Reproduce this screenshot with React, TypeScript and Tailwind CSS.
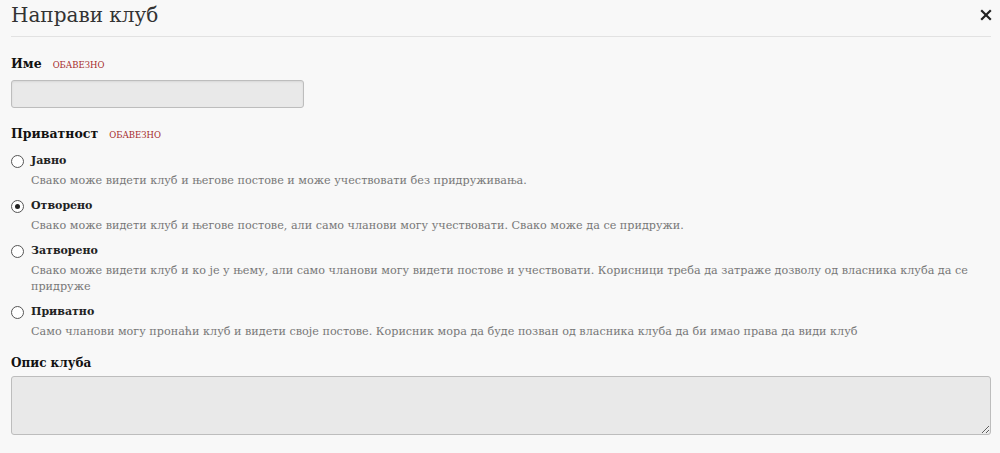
import React, { useState } from 'react';

const options = [
  {
    id: 'public',
    label: 'Јавно',
    desc: 'Свако може видети клуб и његове постове и може учествовати без придруживања.',
  },
  {
    id: 'open',
    label: 'Отворено',
    desc: 'Свако може видети клуб и његове постове, али само чланови могу учествовати. Свако може да се придружи.',
  },
  {
    id: 'closed',
    label: 'Затворено',
    desc: 'Свако може видети клуб и ко је у њему, али само чланови могу видети постове и учествовати. Корисници треба да затраже дозволу од власника клуба да се придруже',
  },
  {
    id: 'private',
    label: 'Приватно',
    desc: 'Само чланови могу пронаћи клуб и видети своје постове. Корисник мора да буде позван од власника клуба да би имао права да види клуб',
  },
];

const Required = () => (
  <span className="ml-[11px] text-[8.5px] uppercase text-[#a52a2a] font-normal">обавезно</span>
);

export default function App() {
  const [privacy, setPrivacy] = useState('open');

  return (
    <div className="min-h-[453px] bg-[#f8f8f8] pl-[11px] pr-[9px] text-[#222] font-['DejaVu_Serif','Liberation_Serif',serif]">
      {/* Header */}
      <div className="flex items-center justify-between h-[37px] border-b border-[#e2e2e2] pb-[7px]">
        <h1 className="text-[20px] leading-none text-[#333]">Направи клуб</h1>
        <button type="button" className="text-[#222] mr-[-1px]">
          <svg width="12" height="12" viewBox="0 0 12 12" fill="none" stroke="currentColor" strokeWidth="2.2">
            <path d="M1.2 1.2l9.6 9.6M10.8 1.2l-9.6 9.6" />
          </svg>
        </button>
      </div>

      {/* Name */}
      <div className="mt-[17px] flex items-baseline leading-[20px]">
        <label className="text-[12.5px] font-bold text-[#111]">Име</label>
        <Required />
      </div>
      <input
        type="text"
        className="mt-[5px] block w-[293px] h-[28px] bg-[#e9e9e9] border border-[#bdbdbd] rounded-[3px] shadow-[inset_0_1px_2px_rgba(0,0,0,0.08)]"
      />

      {/* Privacy */}
      <div className="mt-[16px] flex items-baseline leading-[20px]">
        <label className="text-[12.5px] font-bold text-[#111]">Приватност</label>
        <Required />
      </div>
      <div className="mt-[4px] flex flex-col gap-[5px]">
        {options.map(o => (
          <label key={o.id} className="block cursor-pointer" onClick={() => setPrivacy(o.id)}>
            <div className="flex items-center h-[24px]">
              <span className="w-[13px] h-[13px] rounded-full border border-[#555] bg-white flex items-center justify-center">
                {privacy === o.id && <span className="w-[5px] h-[5px] rounded-full bg-[#222]" />}
              </span>
              <span className="ml-[7px] text-[11px] font-bold text-[#222]">{o.label}</span>
            </div>
            <p className="pl-[20px] text-[11.2px] leading-[16px] text-[#777]">{o.desc}</p>
          </label>
        ))}
      </div>

      {/* Description */}
      <div className="mt-[12px] leading-[20px]">
        <label className="text-[12px] font-bold text-[#111]">Опис клуба</label>
      </div>
      <textarea className="mt-[3px] block w-[980px] h-[59px] bg-[#e9e9e9] border border-[#bdbdbd] rounded-[3px] resize-y" />
    </div>
  );
}
